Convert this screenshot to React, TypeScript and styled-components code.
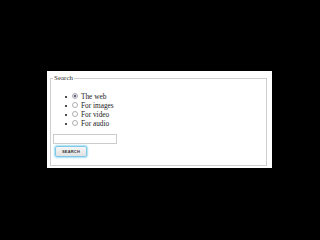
import React from "react";
import styled, { createGlobalStyle } from "styled-components";

const Global = createGlobalStyle`
  html, body {
    margin: 0;
    padding: 0;
    background: #000;
    width: 320px;
    height: 240px;
    overflow: hidden;
  }
`;

const Page = styled.div`
  width: 320px;
  height: 240px;
  padding: 71px 0 0 47px;
  box-sizing: border-box;
`;

const Panel = styled.div`
  width: 225px;
  height: 97px;
  background: #fff;
  box-sizing: border-box;
  padding: 3px 5px 2px 3px;
  font-family: "Liberation Serif", serif;
`;

const Fieldset = styled.fieldset`
  margin: 0;
  height: 100%;
  box-sizing: border-box;
  border: 1px solid #cfcfcf;
  padding: 3px 0 0 3px;
`;

const Legend = styled.legend`
  font-size: 7px;
  color: #333;
  padding: 0 1px;
  margin-left: -1px;
  line-height: 8px;
`;

const List = styled.ul`
  list-style: none;
  margin: 7px 0 0 0;
  padding: 0 0 0 11px;
  font-size: 7.3px;
  color: #222;
`;

const Item = styled.li`
  height: 9px;
  line-height: 9px;
  display: flex;
  align-items: center;

  &::before {
    content: "";
    width: 2px;
    height: 2px;
    border-radius: 50%;
    background: #111;
    margin-right: 5px;
    margin-top: 1px;
  }
`;

const Label = styled.label`
  display: inline-flex;
  align-items: center;
  gap: 3px;
`;

const Radio = styled.span<{ checked?: boolean }>`
  display: inline-block;
  width: 4px;
  height: 4px;
  border-radius: 50%;
  border: 1px solid #b0b0b0;
  margin-top: -2px;
  background: ${(p) => (p.checked ? "radial-gradient(circle, #667 0 1.2px, #dde 1.5px)" : "#fff")};
`;

const Input = styled.div`
  width: 62px;
  height: 8px;
  border: 1px solid #ccc;
  margin-top: 6px;
  margin-left: -1px;
`;

const Button = styled.div`
  width: 30px;
  height: 9px;
  margin-top: 2px;
  margin-left: 1px;
  border: 1px solid #7fc8e8;
  box-shadow: 0 0 1.5px 1px #a8e0f4;
  border-radius: 2px;
  background: linear-gradient(#f6f6f6, #e2e2e2);
  font-family: "Liberation Sans", sans-serif;
  font-size: 4px;
  font-weight: bold;
  color: #333;
  display: flex;
  align-items: center;
  justify-content: center;
  letter-spacing: 0.2px;
`;

const options = ["The web", "For images", "For video", "For audio"];

export default function App() {
  return (
    <Page>
      <Global />
      <Panel>
        <Fieldset>
          <Legend>Search</Legend>
          <List>
            {options.map((o, i) => (
              <Item key={o}>
                <Label>
                  <Radio checked={i === 0} />
                  {o}
                </Label>
              </Item>
            ))}
          </List>
          <Input />
          <Button>SEARCH</Button>
        </Fieldset>
      </Panel>
    </Page>
  );
}
